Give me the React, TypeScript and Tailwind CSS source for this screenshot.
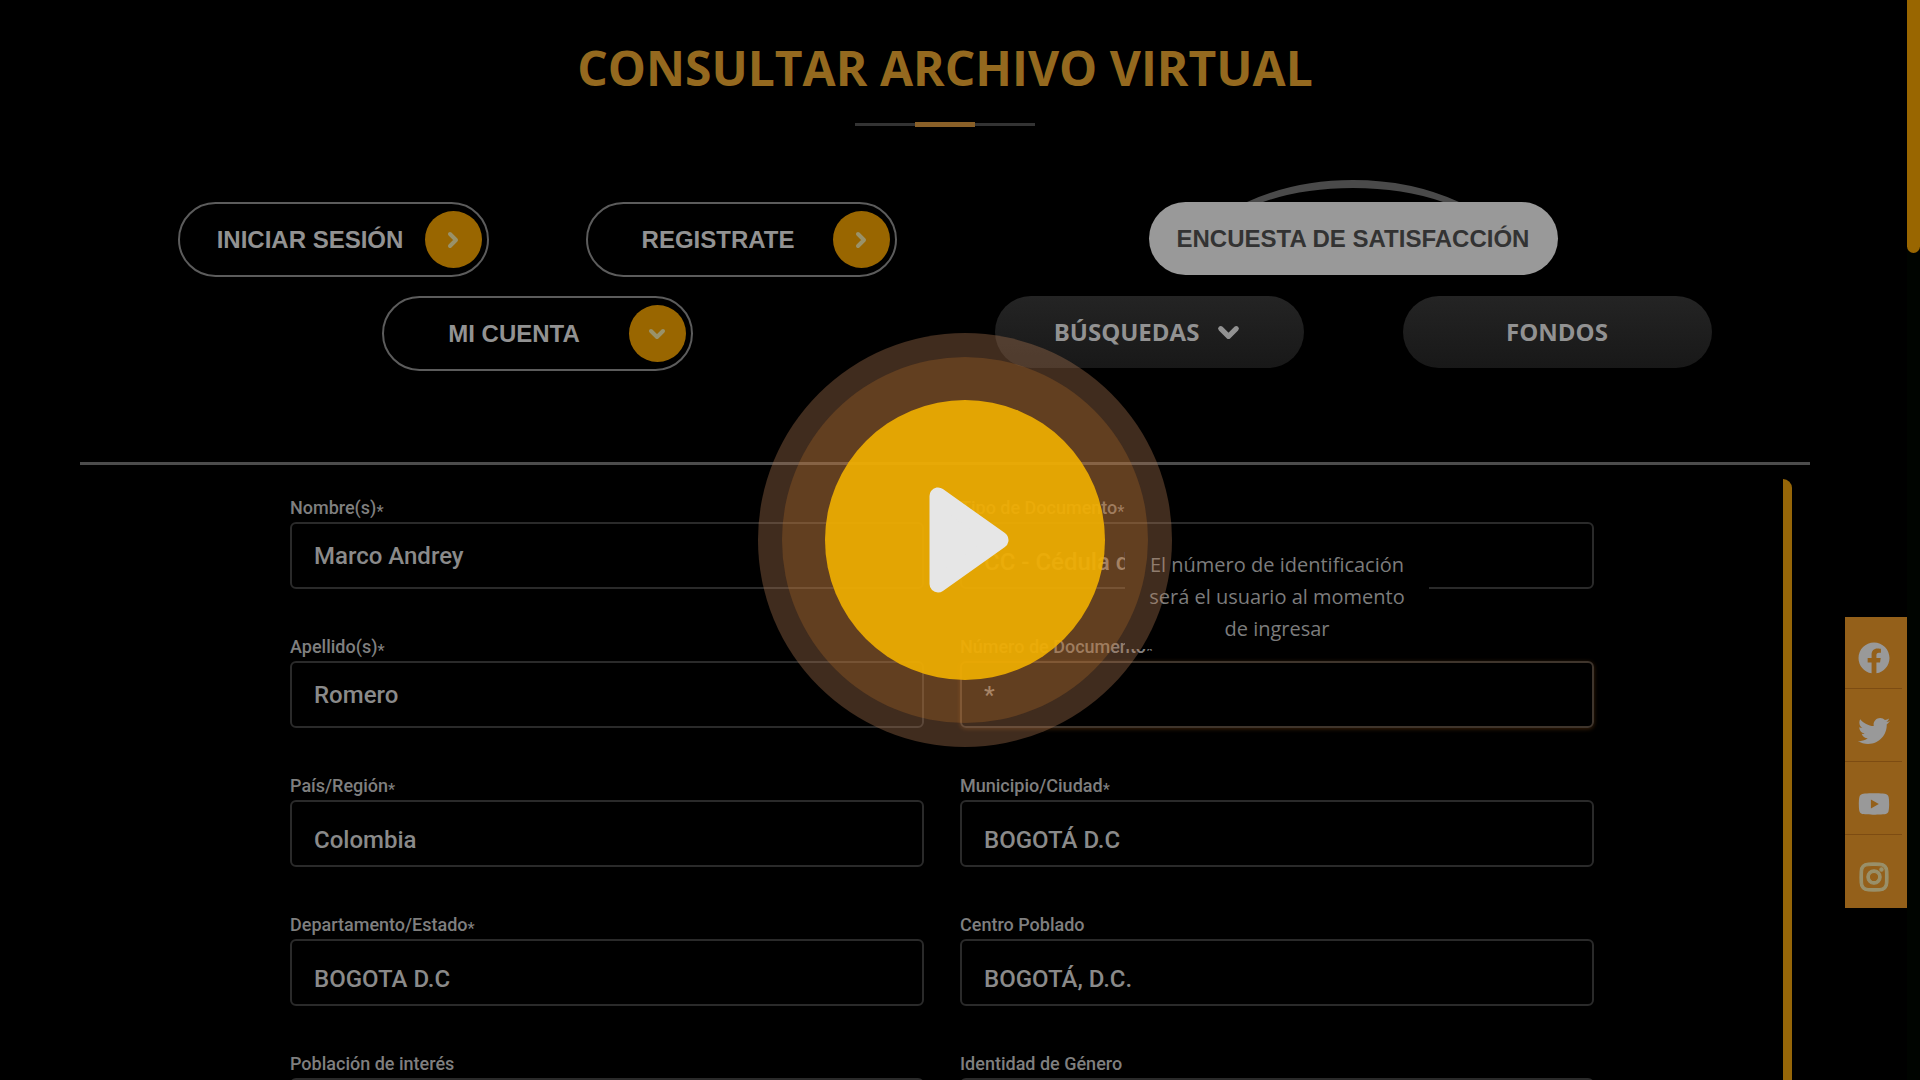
import React from "react";
import { FaFacebook, FaTwitter, FaYoutube, FaInstagram } from "react-icons/fa";
import { ChevronDown, ChevronRight } from "lucide-react";

type FieldProps = {
  id: string;
  label: string;
  value: string;
  required?: boolean;
  select?: boolean;
  focused?: boolean;
};

function Field({ id, label, value, required, select, focused }: FieldProps) {
  const control = focused
    ? "h-[67px] w-full rounded-md border-2 border-[#3f352c] bg-transparent px-[22px] text-2xl font-medium text-[#8f8f8f] shadow-[0_1px_4px_#3a2008] outline-none"
    : "h-[67px] w-full appearance-none rounded-md border-2 border-[#2a2a2a] bg-transparent px-[22px] text-2xl font-medium text-[#8a8a8a] outline-none";
  return (
    <div className="flex h-[139px] flex-col">
      <label htmlFor={id} className="h-[30px] text-lg leading-8 font-medium text-[#7f7f7f]">
        {label}
        {required && <span className="align-[-3px] text-base leading-none">*</span>}
      </label>
      {select ? (
        <select id={id} defaultValue={value} className={`${control} pt-3`}>
          <option value={value}>{value}</option>
        </select>
      ) : (
        <input id={id} type="text" defaultValue={value} className={control} />
      )}
    </div>
  );
}

function PillButton({ text, down }: { text: string; down?: boolean }) {
  return (
    <button
      type="button"
      className="flex h-[75px] w-[311px] items-center rounded-full border-2 border-[#5c5c5c] pr-[5px] pl-4 font-['Liberation_Sans',sans-serif] text-2xl font-bold text-[#929292]"
    >
      <span className="flex-1 whitespace-nowrap text-center">{text}</span>
      <span className="flex size-[57px] items-center justify-center rounded-full bg-[#996600] text-[#99926a]">
        {down ? <ChevronDown size={24} strokeWidth={4} /> : <ChevronRight size={24} strokeWidth={4} />}
      </span>
    </button>
  );
}

const socials = [
  { name: "Facebook", Icon: FaFacebook, color: "text-[#999999]" },
  { name: "Twitter", Icon: FaTwitter, color: "text-[#999999]" },
  { name: "YouTube", Icon: FaYoutube, color: "text-[#999999]" },
  { name: "Instagram", Icon: FaInstagram, color: "text-[#99906a]" },
];

export default function App() {
  return (
    <div className="relative flex h-screen flex-col overflow-hidden bg-black pr-[30px] font-[Roboto,sans-serif]">
      <header className="flex flex-col items-center pt-[35px]">
        <h1 className="font-['Open_Sans',sans-serif] text-5xl leading-[66px] font-bold text-[#94691f]">
          CONSULTAR ARCHIVO VIRTUAL
        </h1>
        <div className="mt-[21px] flex h-[5px] w-[181px] items-center">
          <span className="h-[3px] flex-1 bg-[#333333]" />
          <span className="h-[5px] flex-1 bg-[#8a6028]" />
          <span className="h-[3px] flex-1 bg-[#333333]" />
        </div>
      </header>

      <nav aria-label="Archivo" className="mx-auto mt-[75px] grid w-[1632px] max-w-full grid-cols-2">
        <div className="flex flex-col gap-[19px]">
          <div className="grid grid-cols-2 justify-items-center">
            <PillButton text="INICIAR SESIÓN" />
            <PillButton text="REGISTRATE" />
          </div>
          <div className="flex justify-center">
            <PillButton text="MI CUENTA" down />
          </div>
        </div>
        <div className="flex flex-col gap-[21px]">
          <div className="relative flex justify-center">
            <svg className="absolute bottom-full left-1/2 -translate-x-1/2" width="216" height="24" viewBox="0 0 216 24" fill="none" aria-hidden="true">
              <path d="M2 24 Q50 2 108 2 Q166 2 214 24 L198 24 Q158 10 108 10 Q58 10 18 24 Z" fill="#4a4a4a" />
            </svg>
            <button type="button" className="h-[73px] w-[409px] rounded-full bg-[#999999] font-['Liberation_Sans',sans-serif] text-2xl font-bold whitespace-nowrap text-[#333333]">
              ENCUESTA DE SATISFACCIÓN
            </button>
          </div>
          <div className="grid grid-cols-2 justify-items-center font-['Open_Sans',sans-serif] text-2xl font-bold text-[#929292]">
            <button type="button" className="flex h-[72px] w-[309px] items-center justify-center gap-[14px] rounded-full bg-linear-to-b from-[#242424] to-[#181818]">
              BÚSQUEDAS
              <ChevronDown size={31} strokeWidth={4} />
            </button>
            <button type="button" className="h-[72px] w-[309px] rounded-full bg-linear-to-b from-[#242424] to-[#181818]">
              FONDOS
            </button>
          </div>
        </div>
      </nav>

      <main className="mt-[91px] mr-20 ml-20 flex min-h-0 flex-1 flex-col">
        <hr className="h-[3px] shrink-0 border-0 bg-[#4c4c4c]" />
        <div className="mt-[14px] mr-[18px] flex min-h-0 flex-1 overflow-hidden">
          <form className="grid flex-1 grid-cols-2 content-start gap-x-9 pt-[13px] pr-[189px] pl-[210px]">
            <Field id="nombres" label="Nombre(s)" value="Marco Andrey" required />
            <Field id="tipo" label="Tipo de Documento" value="CC - Cédula de ciudadanía" required select />
            <Field id="apellidos" label="Apellido(s)" value="Romero" required />
            <div className="relative">
              <Field id="numero" label="Número de Documento" value="*" required focused />
              <div role="tooltip" className="absolute bottom-[121px] left-1/2 w-[304px] -translate-x-1/2 bg-black px-6 pt-[6px] pb-1 text-center font-['Open_Sans',sans-serif] text-xl leading-8 text-[#7c7c7c]">
                El número de identificación será el usuario al momento de ingresar
              </div>
            </div>
            <Field id="pais" label="País/Región" value="Colombia" required select />
            <Field id="municipio" label="Municipio/Ciudad" value="BOGOTÁ D.C" required select />
            <Field id="departamento" label="Departamento/Estado" value="BOGOTA D.C" required select />
            <Field id="centro" label="Centro Poblado" value="BOGOTÁ, D.C." select />
            <Field id="poblacion" label="Población de interés" value="" select />
            <Field id="genero" label="Identidad de Género" value="" select />
          </form>
          <div className="w-[9px] rounded-tr-full bg-[#966608]" />
        </div>
      </main>

      <aside aria-label="Redes sociales" className="absolute top-[617px] right-[13px] flex w-[62px] flex-col gap-px bg-[#94601a]">
        {socials.map(({ name, Icon, color }, i) => (
          <a key={name} href="#" aria-label={name} className={`relative flex h-[72px] items-center justify-center pt-[10px] pr-[5px] ${color}`}>
            <Icon size={32} stroke="currentColor" strokeWidth={name === "Instagram" ? 18 : 0} />
            {i < 3 && <span className="absolute bottom-0 left-0 h-px w-[57px] bg-[#7d4c12]" />}
          </a>
        ))}
      </aside>

      <div className="absolute inset-y-0 right-0 w-[13px] bg-[#000400]">
        <div className="h-[253px] rounded-b-full bg-[#996600]" />
      </div>

      <button
        type="button"
        aria-label="Reproducir video"
        className="absolute top-1/2 left-1/2 ml-[5px] flex size-[414px] -translate-x-1/2 -translate-y-1/2 items-center justify-center rounded-full bg-[#b77e56]/35"
      >
        <span className="flex size-[366px] items-center justify-center rounded-full bg-[#c87826]/25">
          <span className="flex size-[280px] items-center justify-center rounded-full bg-[#f2b000]/90">
            <svg className="ml-2" width="80" height="106" viewBox="0 0 80 106" aria-hidden="true">
              <path d="M9 9 V97 L71 53 Z" fill="#e6e6e6" stroke="#e6e6e6" strokeWidth="17" strokeLinejoin="round" />
            </svg>
          </span>
        </span>
      </button>
    </div>
  );
}
